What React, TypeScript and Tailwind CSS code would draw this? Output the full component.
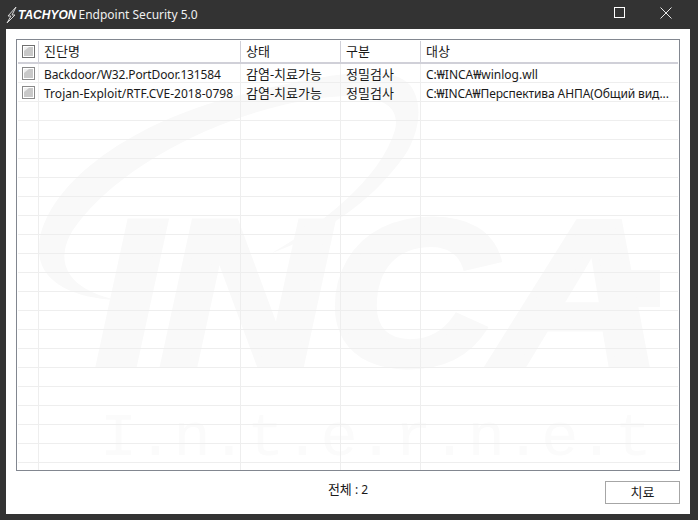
const font = { fontFamily: '"Noto Sans", "Noto Sans CJK KR", sans-serif' };

function Check({ header }: { header?: boolean }) {
  return (
    <svg width="13" height="13" viewBox="0 0 13 13" className="block">
      <rect x="0.5" y="0.5" width="12" height="12" fill="#fff" stroke={header ? "#707070" : "#8a8a8a"} />
      <rect x="2" y="2" width="9" height="9" fill="#c8c8c8" />
      <path d="M2 11V6L7 2H2Z" fill="#efefef" />
    </svg>
  );
}

const rows = [
  { tracking: ["tracking-[-0.14px]", "tracking-[0px]"], c: ["Backdoor/W32.PortDoor.131584", "감염-치료가능", "정밀검사", "C:₩INCA₩winlog.wll"] },
  { tracking: ["tracking-[0.03px]", "tracking-[-0.11px]"], c: ["Trojan-Exploit/RTF.CVE-2018-0798", "감염-치료가능", "정밀검사", "C:₩INCA₩Перспектива АНПА(Общий вид..."] },
];

function Cell({ w, children, last }: { w: string; children?: React.ReactNode; last?: boolean }) {
  return (
    <div className={`${w} ${last ? "" : "border-r border-[#eeeeee]"} flex h-full items-center overflow-hidden whitespace-nowrap pl-[5px] pt-[3px] text-[#1a1a1a]`}>
      {children}
    </div>
  );
}

function Row({ r }: { r?: { tracking: string[]; c: string[] } }) {
  return (
    <div className="relative flex h-[19px] shrink-0 border-b border-[#eeeeee]">
      <div className="flex h-full w-[21px] items-center justify-center border-r border-[#eeeeee] pl-[1px] pt-[1px]">
        {r ? <Check /> : null}
      </div>
      <Cell w="w-[202px]"><span className={`text-[12px] ${r?.tracking[0] ?? ""}`}>{r?.c[0]}</span></Cell>
      <Cell w="w-[100px]"><span className="text-[13px]">{r?.c[1]}</span></Cell>
      <Cell w="w-[80px]"><span className="text-[13px]">{r?.c[2]}</span></Cell>
      <Cell w="flex-1" last><span className={`text-[12px] ${r?.tracking[1] ?? ""}`}>{r?.c[3]}</span></Cell>
    </div>
  );
}

export default function App() {
  const empties = Array.from({ length: 20 }, (_, i) => i);
  const head = "flex h-full items-center pl-[5px] pt-[1px] text-[13px] text-[#1a1a1a]";
  return (
    <div className="flex h-[520px] w-[698px] flex-col overflow-hidden bg-[#333333]" style={font}>
      <div className="flex h-[29px] shrink-0 items-center pl-[6px]">
        <svg width="11" height="18" viewBox="0 0 11 18" className="mr-[1px]">
          <path d="M10 1 2 10h3L1 17M10 1 6 9h3L1 17" fill="none" stroke="#d8d8d8" strokeWidth="1" />
        </svg>
        <span className="mr-[2px] text-[12px] font-bold italic leading-none text-white" style={{ fontFamily: '"Liberation Sans", sans-serif' }}>
          TACHYON
        </span>
        <span className="text-[12px] text-[#f0f0f0]">Endpoint Security 5.0</span>
        <div className="mb-[4px] ml-auto flex items-center">
          <svg width="12" height="12" viewBox="0 0 12 12" className="mr-[34px]">
            <rect x="0.500" y="0.500" width="10" height="10" fill="none" stroke="#fff" />
          </svg>
          <svg width="12" height="12" viewBox="0 0 12 12" className="mr-[26px]">
            <path d="M0.500 0.500 11.500 11.500M11.500 0.500 0.500 11.500" stroke="#e8e8e8" strokeWidth="1" />
          </svg>
        </div>
      </div>
      <div className="mb-[6px] ml-[6px] mr-[8px] flex flex-1 flex-col bg-white pl-[10px] pr-[10px] pt-[10px]">
        <div className="relative h-[432px] shrink-0 overflow-hidden border border-[#828790] p-[1px]">
          <svg className="pointer-events-none absolute left-0 top-0" width="662" height="430" viewBox="17 40 662 430">
            <path d="M117 300C70 298 36 280 39 245C44 190 120 125 240 95C320 75 390 62 410 85C425 105 418 135 405 155C370 205 320 235 272 253C320 225 380 180 395 130C402 100 370 92 320 98C220 112 110 170 70 235C55 265 70 290 117 300Z" fill="#f9f9f9" />
            <rect x="622" y="270" width="38" height="37" fill="#f9f9f9" />
            <text x="96" y="364" textLength="566" lengthAdjust="spacingAndGlyphs" fontFamily="'Liberation Sans'" fontWeight="700" fontStyle="italic" fontSize="206" fill="#f9f9f9" stroke="#f9f9f9" strokeWidth="7">INCA</text>
            <text x="100" y="455" textLength="552" fontFamily="'Liberation Mono'" fontSize="62" fill="#fbfbfb">I.n.t.e.r.n.e.t</text>
          </svg>
          <div className="relative flex h-full flex-col">
            <div className="flex h-[23px] shrink-0 border-b-2 border-[#d0d0d8]">
              <div className="flex h-full w-[21px] items-center justify-center border-r border-[#d0d0d8]">
                <Check header />
              </div>
              <div className={`${head} w-[202px] border-r border-[#d0d0d8]`}>진단명</div>
              <div className={`${head} w-[100px] border-r border-[#d0d0d8]`}>상태</div>
              <div className={`${head} w-[80px] border-r border-[#d0d0d8]`}>구분</div>
              <div className={`${head} flex-1`}>대상</div>
            </div>
            {rows.map((r, i) => <Row key={i} r={r} />)}
            {empties.map((i) => <Row key={i} />)}
          </div>
        </div>
        <div className="relative flex flex-1 items-start justify-center">
          <span className="mt-[9px] text-[12px] text-[#1a1a1a]">
            <span className="text-[13px]">전체</span> : 2
          </span>
          <button className="absolute right-0 top-[10px] h-[23px] w-[75px] border border-[#a6a6a6] bg-white text-[13px] text-[#1a1a1a]">치료</button>
        </div>
      </div>
    </div>
  );
}
